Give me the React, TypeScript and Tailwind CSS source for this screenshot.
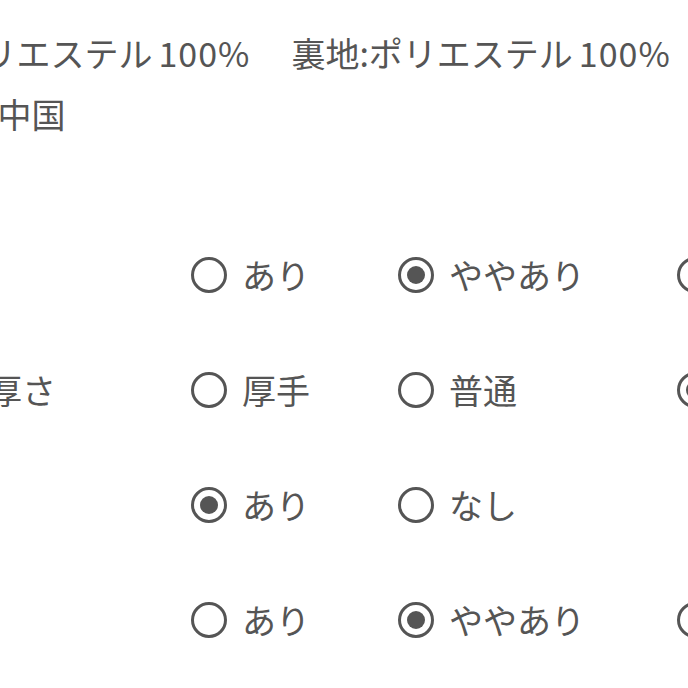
import React from "react";

function Radio({ checked }: { checked: boolean }) {
  return (
    <span className="flex h-[36px] w-[36px] shrink-0 items-center justify-center rounded-full border-[3px] border-[#555555]">
      {checked ? <span className="block h-[18px] w-[18px] rounded-full bg-[#555555]" /> : null}
    </span>
  );
}

const rows: { label: string; options: string[]; selected: number }[] = [
  { label: "伸縮性", options: ["あり", "ややあり", "なし"], selected: 1 },
  { label: "生地の厚さ", options: ["厚手", "普通", "薄手"], selected: 2 },
  { label: "裏地", options: ["あり", "なし"], selected: 0 },
  { label: "透け感", options: ["あり", "ややあり", "なし"], selected: 1 },
];

const colW = ["w-[207px]", "w-[279px]", "w-[200px]"];

export default function App() {
  return (
    <div
      className="h-[688px] w-[688px] overflow-hidden bg-white text-[#555555]"
      style={{ fontFamily: '"Noto Sans CJK JP", sans-serif' }}
    >
      <div className="ml-[-114px] w-[1000px] pt-[22px]">
        <div className="ml-[-15px] flex whitespace-nowrap text-[34px] leading-[61px]">
          <span>表地:ポリエステル</span>
          <span className="ml-[6px] tracking-[1px]">100%</span>
          <span className="w-[41px]" />
          <span>裏地:ポリエステル</span>
          <span className="ml-[6px] tracking-[1px]">100%</span>
        </div>
        <div className="whitespace-nowrap text-[34px] leading-[61px]">原産国:中国</div>
        <div className="mt-[73px]">
          {rows.map((r) => (
            <div key={r.label} className="flex h-[115px] items-center">
              <div className="w-[305px] shrink-0 whitespace-nowrap text-[34px]">{r.label}</div>
              {r.options.map((o, i) => (
                <div key={o + i} className={`${colW[i]} flex shrink-0 items-center gap-[15px]`}>
                  <Radio checked={i === r.selected} />
                  <span className="whitespace-nowrap text-[34px] leading-none">{o}</span>
                </div>
              ))}
            </div>
          ))}
        </div>
      </div>
    </div>
  );
}
